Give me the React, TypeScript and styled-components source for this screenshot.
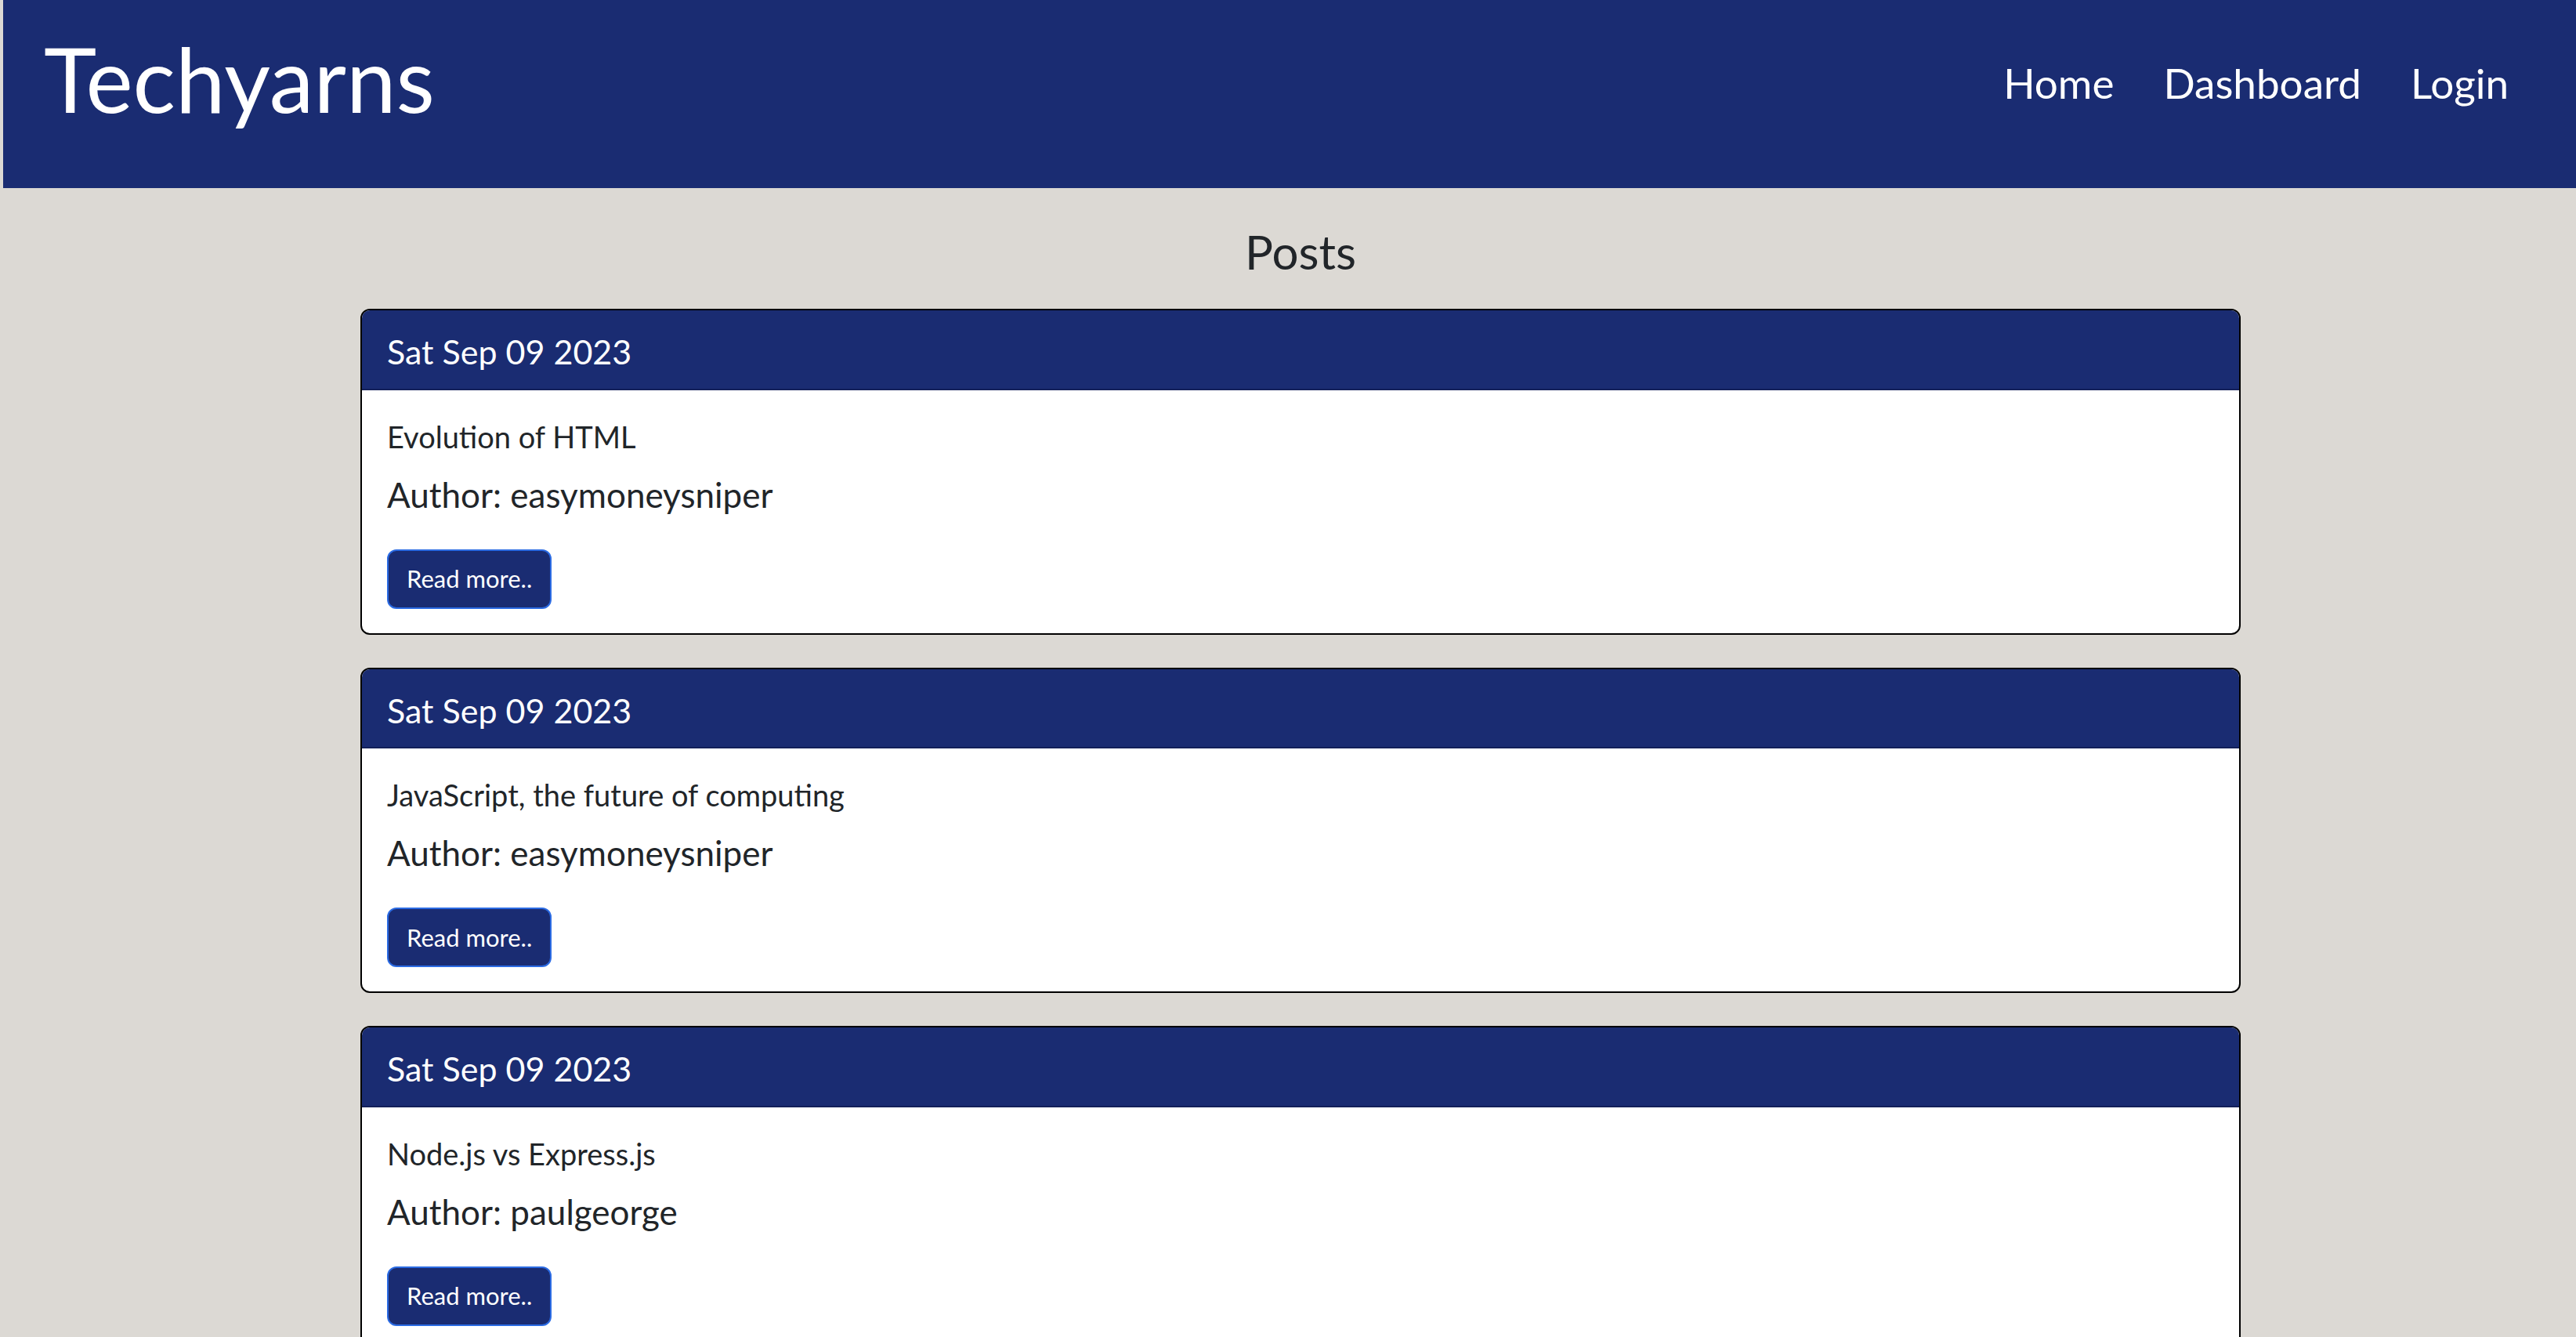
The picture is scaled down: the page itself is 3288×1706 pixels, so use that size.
import React from "react";
import styled, { createGlobalStyle } from "styled-components";

const GlobalStyle = createGlobalStyle`
  html, body {
    margin: 0;
    padding: 0;
    background: #dcd9d4;
  }
  body {
    font-family: Lato, "Noto Sans", sans-serif;
    color: #212529;
  }
  * { box-sizing: border-box; }
`;

const Page = styled.div`
  min-height: 1706px;
  padding-left: 4px;
  background: #dcd9d4;
`;

const NavBar = styled.header`
  height: 240px;
  background: #1a2c72;
  display: flex;
  justify-content: space-between;
  align-items: flex-start;
  padding: 32px 86px 0 52px;
`;

const Brand = styled.a`
  font-size: 114px;
  line-height: 1.2;
  color: #ffffff;
  text-decoration: none;
`;

const NavLinks = styled.nav`
  display: flex;
  gap: 63px;
  margin-top: 42px;
`;

const NavLink = styled.a`
  font-size: 53px;
  line-height: 1.2;
  color: #ffffff;
  text-decoration: none;
`;

const Main = styled.main`
  display: flex;
  flex-direction: column;
  align-items: center;
  padding-left: 28px;
`;

const PageTitle = styled.h1`
  margin: 45px 0 37px;
  font-size: 60px;
  line-height: 1.2;
  font-weight: 400;
  color: #212529;
`;

const CardList = styled.div`
  width: 2400px;
  display: flex;
  flex-direction: column;
  gap: 42px;
`;

const Card = styled.article`
  background: #ffffff;
  border: 2px solid #000000;
  border-radius: 12px;
  overflow: hidden;
`;

const CardHeader = styled.div`
  background: #1a2c72;
  color: #ffffff;
  border-bottom: 2px solid #13205a;
  padding: 27px 32px 21px;
  font-size: 43px;
  line-height: 1.2;
`;

const CardBody = styled.div`
  padding: 31px 32px 31px;
  display: flex;
  flex-direction: column;
  align-items: flex-start;
`;

const PostTitle = styled.p`
  margin: 0;
  font-size: 38px;
  line-height: 1.5;
`;

const PostAuthor = styled.p`
  margin: 12px 0 37px;
  font-size: 44px;
  line-height: 1.5;
`;

const ReadMore = styled.button`
  height: 76px;
  padding: 0 23px;
  background: #1a2c72;
  color: #ffffff;
  border: 2px solid #2b6be3;
  border-radius: 12px;
  font-family: Lato, "Noto Sans", sans-serif;
  font-size: 31px;
  line-height: 1;
  cursor: pointer;
`;

const posts = [
  { date: "Sat Sep 09 2023", title: "Evolution of HTML", author: "easymoneysniper" },
  { date: "Sat Sep 09 2023", title: "JavaScript, the future of computing", author: "easymoneysniper" },
  { date: "Sat Sep 09 2023", title: "Node.js vs Express.js", author: "paulgeorge" },
];

export default function App() {
  return (
    <>
      <GlobalStyle />
      <Page>
        <NavBar>
          <Brand href="#">Techyarns</Brand>
          <NavLinks>
            <NavLink href="#">Home</NavLink>
            <NavLink href="#">Dashboard</NavLink>
            <NavLink href="#">Login</NavLink>
          </NavLinks>
        </NavBar>
        <Main>
          <PageTitle>Posts</PageTitle>
          <CardList>
            {posts.map((p, i) => (
              <Card key={i}>
                <CardHeader>{p.date}</CardHeader>
                <CardBody>
                  <PostTitle>{p.title}</PostTitle>
                  <PostAuthor>Author: {p.author}</PostAuthor>
                  <ReadMore>Read more..</ReadMore>
                </CardBody>
              </Card>
            ))}
          </CardList>
        </Main>
      </Page>
    </>
  );
}
